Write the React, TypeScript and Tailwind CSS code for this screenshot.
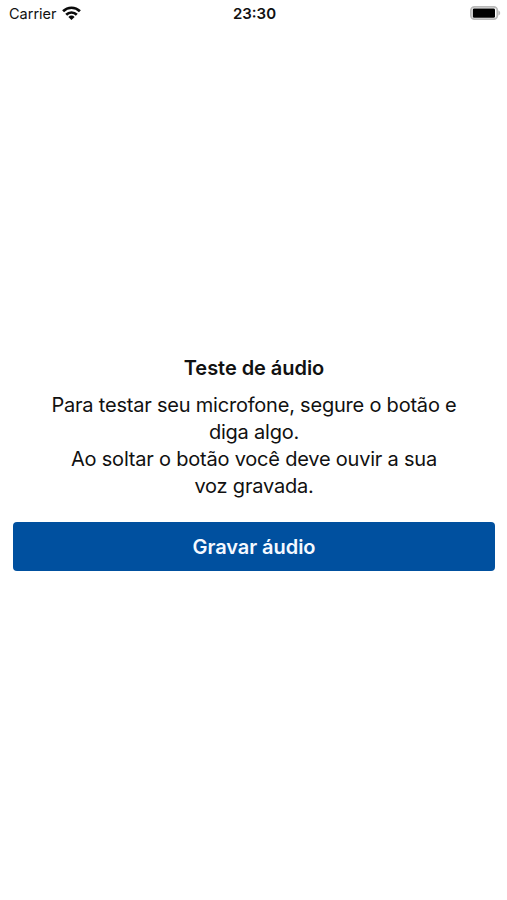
const instrucoes = ["Para testar seu microfone, segure o botão e", "diga algo.", "Ao soltar o botão você deve ouvir a sua", "voz gravada."]

function StatusBar() {
  return (
    <header className="grid h-7 grid-cols-3 items-center pl-2 pr-[6px] text-[14.5px] text-[#111111]">
      <div className="flex items-center gap-[5px] pl-px">
        <span>Carrier</span>
        <svg className="mb-[2px]" width="19" height="14" viewBox="0 0 19 14" fill="none" stroke="#0a0a0a" strokeWidth="2.7">
          <path d="M1.1 5.2a12 12 0 0 1 16.8 0" />
          <path d="M4.2 8.7a7.5 7.5 0 0 1 10.6 0" />
          <path d="M9.5 14 6.4 10.9a4.4 4.4 0 0 1 6.2 0Z" fill="#0a0a0a" stroke="none" />
        </svg>
      </div>
      <span className="text-center text-[15px] font-semibold">23:30</span>
      <svg className="mb-[2px] justify-self-end" width="31" height="14" viewBox="0 0 31 14">
        <rect x="0.9" y="0.9" width="26.4" height="12.2" rx="3.6" fill="none" stroke="#b9b9b9" strokeWidth="1.8" />
        <rect x="2.8" y="2.4" width="22.2" height="9.4" rx="1.4" fill="black" />
        <path d="M28.4 4.5c2.4.8 2.4 4.2 0 5Z" fill="#b9b9b9" />
      </svg>
    </header>
  )
}

export default function App() {
  return (
    <div className="flex h-screen flex-col bg-white font-['Inter',sans-serif]">
      <StatusBar />
      <main className="flex flex-col items-center pl-[13px] pr-3 pt-[327px] text-[#111111]">
        <h1 className="text-[20px] font-semibold leading-[27px] tracking-[-0.05px]">Teste de áudio</h1>
        <div className="mt-[10px] text-center text-[20px] leading-[27px] tracking-[-0.21px]">
          {instrucoes.map((linha) => (
            <p key={linha}>{linha}</p>
          ))}
        </div>
        <button className="mt-[22px] h-[49px] w-full rounded bg-[#00509f] text-[20px] font-semibold tracking-[-0.05px] text-[#f5f9ff]">
          Gravar áudio
        </button>
      </main>
    </div>
  )
}
